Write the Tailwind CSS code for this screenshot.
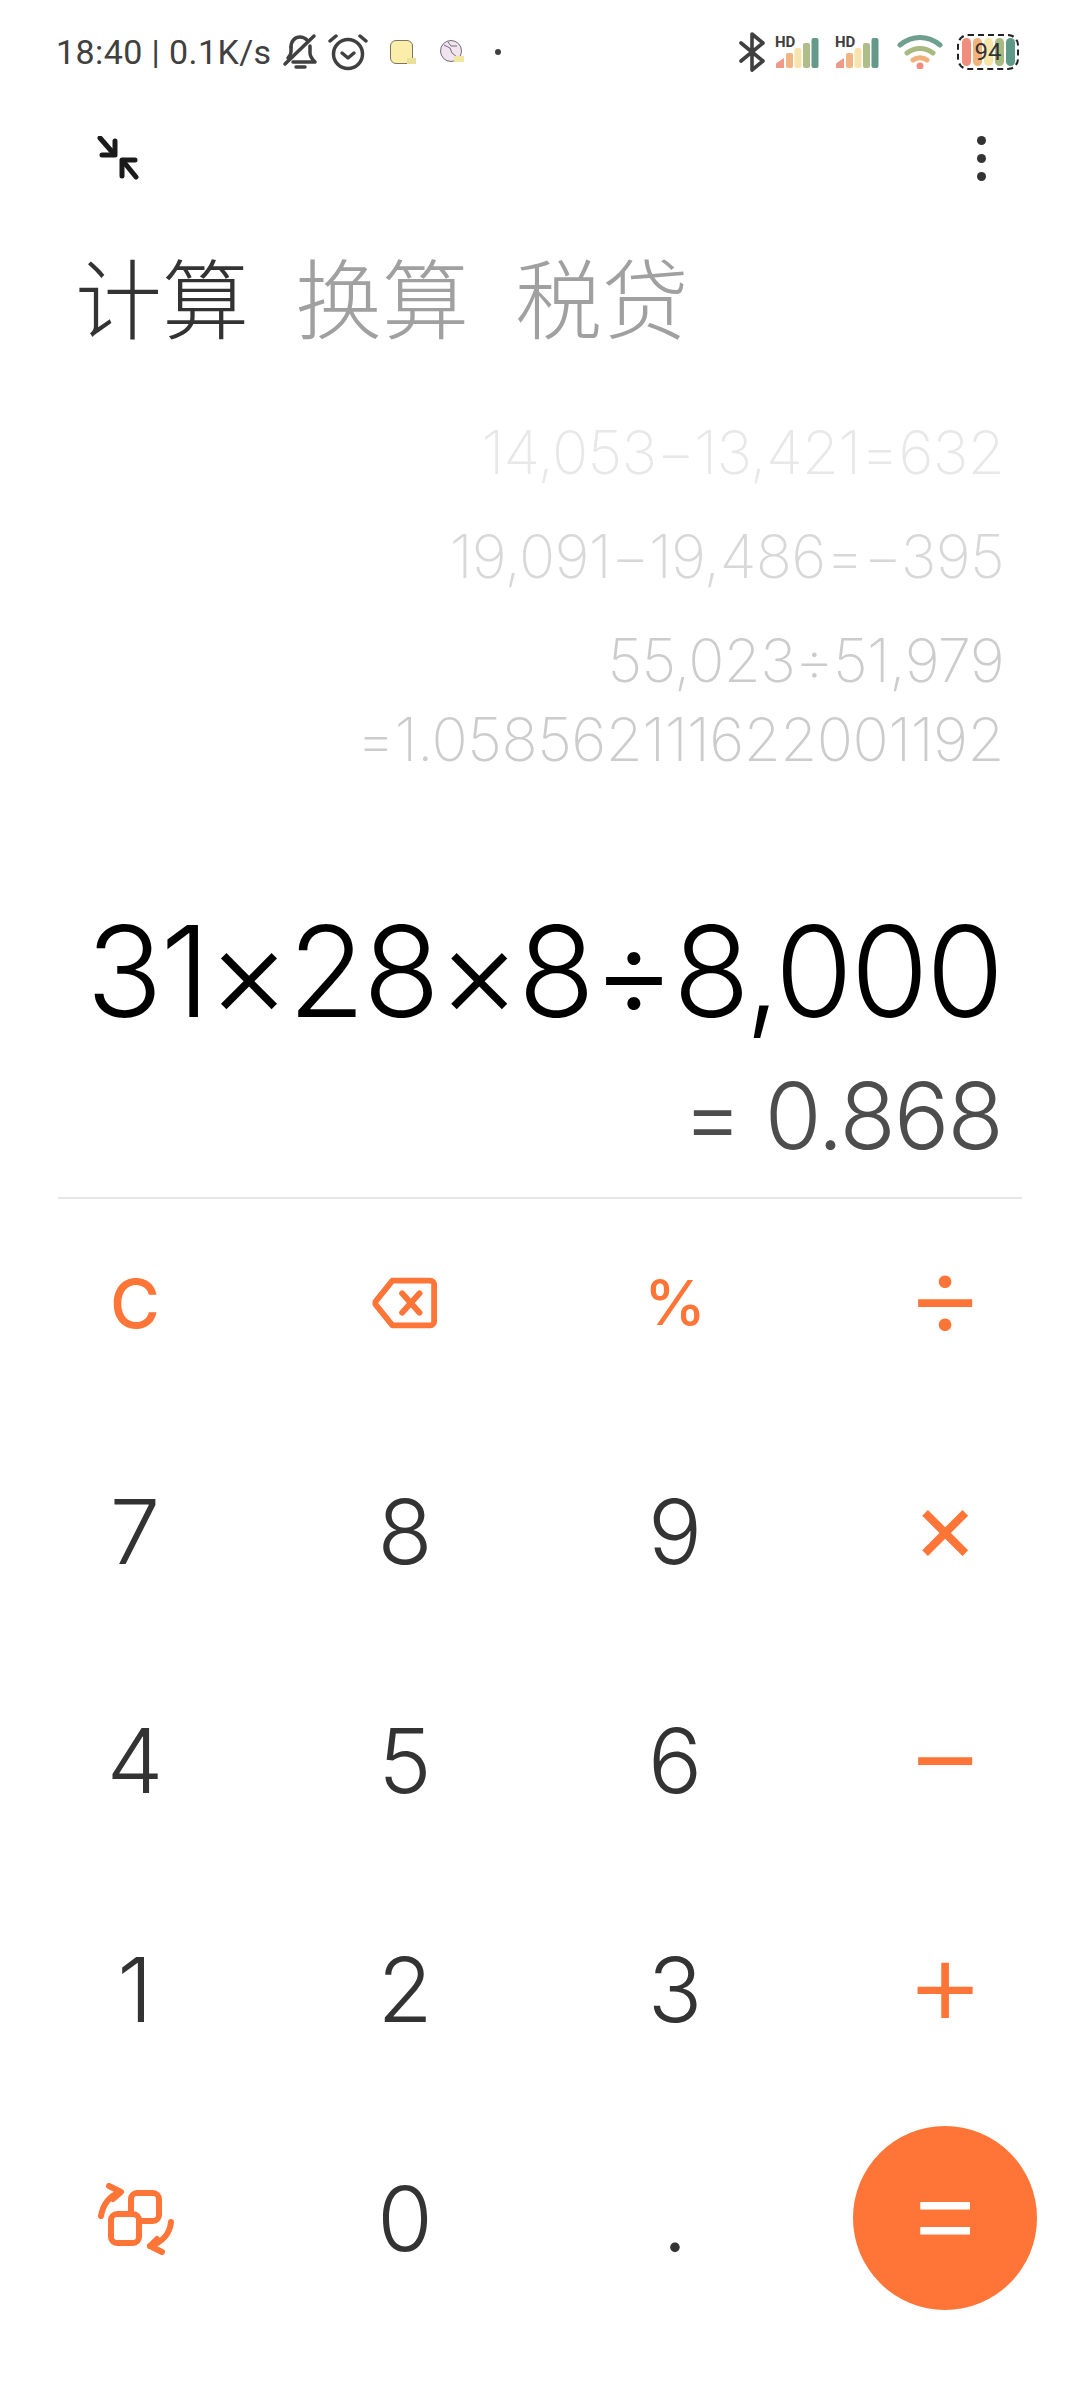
<!DOCTYPE html>
<html lang="zh-CN">
<head>
    <meta charset="UTF-8">
    <meta name="viewport" content="width=device-width, initial-scale=1.0">
    <title>计算器</title>
    <script src="https://cdn.jsdelivr.net/npm/@tailwindcss/browser@4"></script>
</head>
<body class="bg-white font-['Inter',sans-serif] w-[1080px] h-[2400px] overflow-hidden">
    <!-- status bar -->
    <div class="h-[104px] flex items-center pl-[56px] text-[#404040]">
        <span class="font-['Roboto',sans-serif] w-[226px] text-[34px] whitespace-nowrap tracking-[0.4px]">18:40 | 0.1K/s</span>
        <svg width="36" height="38" viewBox="0 0 36 38" fill="none" stroke="#404040" stroke-width="3.5" stroke-linecap="round" stroke-linejoin="round">
            <path d="M9 14c0-6 4-10 9-10 3 0 5 1 7 3"/><path d="M28 13v7c0 3 2 6 5 9H11"/><path d="M9 14v5c0 2-1 4-3 6"/><path d="M3 31 32 3"/><path d="M14 34h9"/>
        </svg>
        <svg class="ml-[10px]" width="40" height="38" viewBox="0 0 40 38" fill="none" stroke="#404040" stroke-width="3.5" stroke-linecap="round" stroke-linejoin="round">
            <circle cx="20" cy="21" r="14.5"/><path d="m14 20 6 5 6-5"/><path d="M2 8l6-5"/><path d="M38 8l-6-5"/>
        </svg>
        <div class="ml-[22px] relative w-[23px] h-[24px] rounded-[6px] bg-[#fbeeaa] border border-[#7d7560]">
            <span class="absolute -right-[4px] -bottom-[1px] w-[9px] h-[6px] bg-[#e9df9a]"></span>
        </div>
        <svg class="ml-[26px]" width="26" height="26" viewBox="0 0 26 26" fill="#f0e4ee" stroke="#7a6a78" stroke-width="1">
            <circle cx="12" cy="12" r="10.5"/><path d="M5 6l6 3 2 5 5 4M9 3l3 4 6 0" fill="none"/><rect x="15" y="17" width="10" height="6" fill="#efe7a0" stroke="none"/>
        </svg>
        <span class="ml-[30px] w-[6px] h-[6px] rounded-full bg-[#404040]"></span>
        <svg class="ml-[238px]" width="26" height="40" viewBox="0 0 26 40" fill="none" stroke="#404040" stroke-width="3.6" stroke-linecap="round" stroke-linejoin="round">
            <path d="M2 11l22 18-11 9V2l11 9L2 29"/>
        </svg>
        <!-- signal 1 -->
        <div class="ml-[10px] relative w-[44px] h-[34px]">
            <span class="absolute left-0 top-0 font-['Roboto',sans-serif] text-[15px] leading-[15px] font-bold text-[#404040]">HD</span>
            <svg class="absolute inset-0" width="44" height="34" viewBox="0 0 44 34">
                <path d="M1 33v-4q0-1 2-2l6-4v10z" fill="#ef9a88"/><rect x="11" y="18" width="7" height="15" rx="2" fill="#f1b583"/><rect x="19.500" y="13" width="7" height="20" rx="2" fill="#f7e4ad"/><rect x="28" y="8" width="7" height="25" rx="2" fill="#aebd8a"/><rect x="36.500" y="3" width="7" height="30" rx="2" fill="#659a8a"/>
            </svg>
        </div>
        <div class="ml-[16px] relative w-[44px] h-[34px]">
            <span class="absolute left-0 top-0 font-['Roboto',sans-serif] text-[15px] leading-[15px] font-bold text-[#404040]">HD</span>
            <svg class="absolute inset-0" width="44" height="34" viewBox="0 0 44 34">
                <path d="M1 33v-4q0-1 2-2l6-4v10z" fill="#ef9a88"/><rect x="11" y="18" width="7" height="15" rx="2" fill="#f1b583"/><rect x="19.500" y="13" width="7" height="20" rx="2" fill="#f7e4ad"/><rect x="28" y="8" width="7" height="25" rx="2" fill="#aebd8a"/><rect x="36.500" y="3" width="7" height="30" rx="2" fill="#659a8a"/>
            </svg>
        </div>
        <svg class="ml-[18px]" width="46" height="34" viewBox="0 0 46 34" fill="none" stroke-linecap="round">
            <path d="M3 10C15 0 31 0 43 10" stroke="#6f9f8e" stroke-width="5"/>
            <path d="M10 18c8-6 18-6 26 0" stroke="#a8ba80" stroke-width="5"/>
            <path d="M16 25c4-3 10-3 14 0" stroke="#f0b07a" stroke-width="5"/>
            <circle cx="23" cy="31" r="3.5" fill="#f08d7c"/>
        </svg>
        <div class="ml-[14px] relative w-[62px] h-[36px] rounded-[11px] border-[2.5px] border-dashed border-[#222] overflow-hidden flex items-center justify-center gap-[2px]">
            <span class="w-[9px] h-[28px] rounded-full bg-[#f08d7c]"></span>
            <span class="w-[9px] h-[28px] rounded-full bg-[#f3b27a]"></span>
            <span class="w-[9px] h-[28px] rounded-full bg-[#f8e5a8]"></span>
            <span class="w-[9px] h-[28px] rounded-full bg-[#a8ba80]"></span>
            <span class="w-[9px] h-[28px] rounded-full bg-[#5f9a88]"></span>
            <span class="absolute inset-0 flex items-center justify-center font-['Roboto',sans-serif] text-[24px] text-[#333]">94</span>
        </div>
    </div>

    <!-- toolbar -->
    <div class="h-[108px] flex items-center justify-between pl-[97px] pr-[94px]">
        <svg width="44" height="44" viewBox="0 0 44 44" fill="none" stroke="#1a1a1a" stroke-width="5" stroke-linecap="round" stroke-linejoin="round">
            <path d="M3 2l14 16"/><path d="M18 5v14H5"/><path d="M39 41 26 25"/><path d="M25 40V24h13"/>
        </svg>
        <div class="flex flex-col gap-[9px]">
            <span class="w-[9px] h-[9px] rounded-full bg-[#333]"></span>
            <span class="w-[9px] h-[9px] rounded-full bg-[#333]"></span>
            <span class="w-[9px] h-[9px] rounded-full bg-[#333]"></span>
        </div>
    </div>

    <!-- tabs -->
    <div class="mt-[21px] h-[124px] pl-[75px] flex items-center gap-[46px] text-[87px] leading-none font-light font-['Noto_Sans_CJK_SC','Roboto',sans-serif] text-[#a0a0a0]">
        <span class="text-[#333]">计算</span>
        <span>换算</span>
        <span>税贷</span>
    </div>

    <!-- history -->
    <div class="mt-[56px] pr-[76px] text-right text-[60px] font-[250] leading-[79px] tracking-[-0.7px]">
        <p class="text-[#e8e8e8]">14,053−13,421=632</p>
        <p class="mt-[25px] text-[#d8d8d8]">19,091−19,486=−395</p>
        <p class="mt-[25px] text-[#cccccc]">55,023÷51,979<br><span class="tracking-[-0.5px]">=1.058562111622001192</span></p>
    </div>

    <!-- current expression -->
    <div class="mt-[127px] pr-[78px] text-right">
        <p class="text-[126px] leading-[130px] font-[350] tracking-[-2.2px] text-black">31×28×8÷8,000</p>
        <p class="mt-[30px] text-[92px] leading-[100px] font-light tracking-[-1.8px] text-[#4d4d4d]">= 0.868</p>
    </div>
    <div class="mt-[31px] mx-[58px] border-t-2 border-[#e6e6e6]"></div>

    <!-- keypad -->
    <div class="-mt-[11px] grid grid-cols-4 auto-rows-[229px] place-items-center text-[90px] font-light text-[#333]">
        <span class="text-[68px] font-medium text-[#ff7537]">C</span>
        <svg width="66" height="54" viewBox="0 0 68 54" fill="none" stroke="#ff7537" stroke-width="6" stroke-linecap="round" stroke-linejoin="round">
            <path d="M21 4h39a4 4 0 0 1 4 4v38a4 4 0 0 1-4 4H21L4 29a4 4 0 0 1 0-4z"/><path d="m31 17 18 20M49 17 31 37"/>
        </svg>
        <span class="text-[62px] font-medium text-[#ff7537]">%</span>
        <span class="pb-[18px] text-[122px] text-[#ff7537]">÷</span>

        <span>7</span><span>8</span><span>9</span>
        <span class="pb-[14px] text-[100px] font-normal text-[#ff7537]">×</span>
        <span>4</span><span>5</span><span>6</span>
        <span class="pb-[18px] text-[122px] text-[#ff7537]">−</span>
        <span>1</span><span>2</span><span>3</span>
        <span class="pb-[18px] text-[122px] text-[#ff7537]">+</span>

        <svg width="78" height="72" viewBox="0 0 78 72" fill="none" stroke="#ff7537" stroke-width="6" stroke-linecap="round" stroke-linejoin="round">
            <rect x="35" y="10" width="28" height="28" rx="6"/><rect x="15" y="31" width="28" height="29" rx="6" fill="#fff"/>
            <path d="M5 33C7 21 14 13 24 9"/><path d="M13 3l12 6-8 7"/><path d="M75 39c-1 11-8 20-21 24"/><path d="M66 69l-12-6 7-7"/>
        </svg>
        <span>0</span><span>.</span>
        <div class="-mt-[2px] w-[184px] h-[184px] rounded-full bg-[#ff7537] flex items-center justify-center pb-[18px] text-[122px] text-white">=</div>
    </div>
</body>
</html>
